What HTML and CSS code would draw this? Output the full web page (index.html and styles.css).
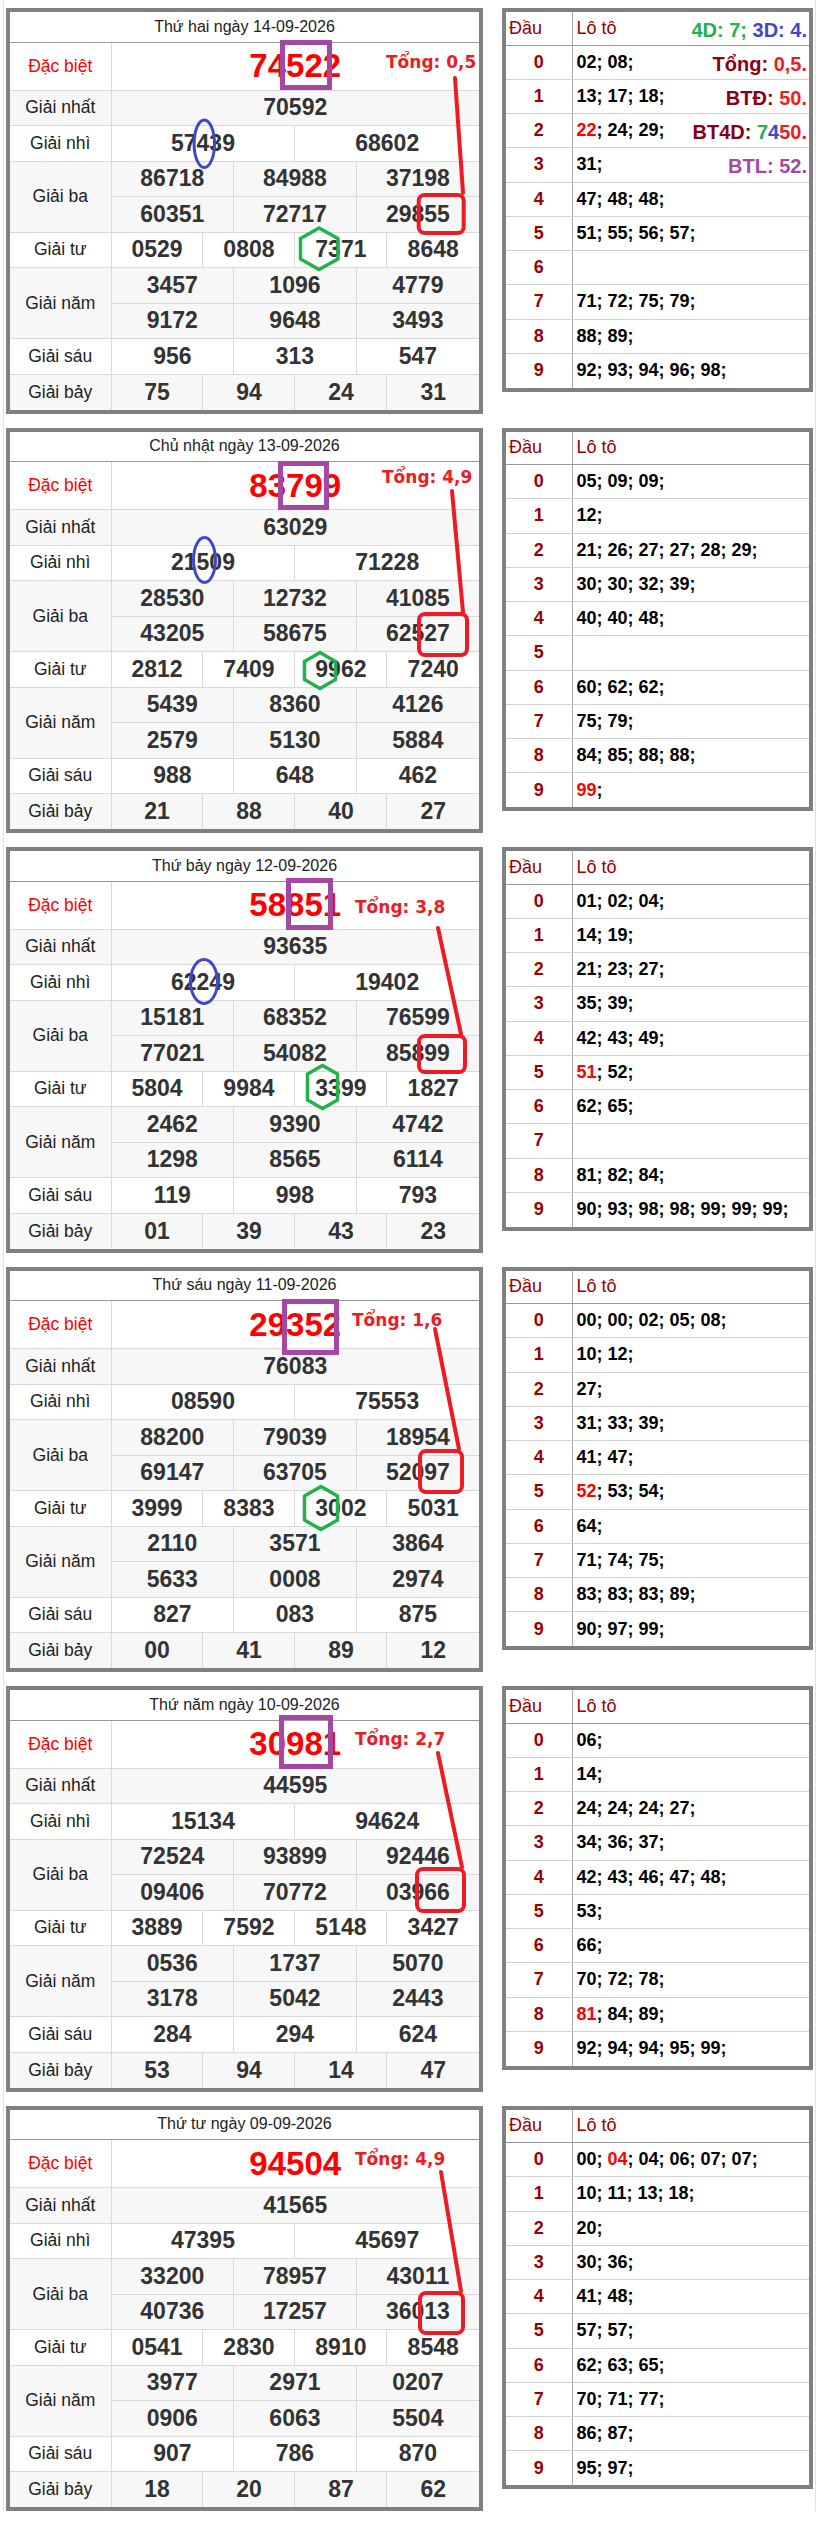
FILE: index.html
```html
<!DOCTYPE html>
<html lang="vi">
<head>
<meta charset="utf-8">
<title>Kết quả xổ số</title>
<link rel="stylesheet" href="styles.css">
</head>
<body>
<div class="page">

<!-- Day 1 -->
<div class="day">
  <div class="kq">
    <table>
      <colgroup><col class="cl"><col span="12"></colgroup>
      <tr class="hd"><td colspan="13">Thứ hai ngày 14-09-2026</td></tr>
      <tr class="db"><td class="lb red">Đặc biệt</td><td colspan="12" class="dbn">74522</td></tr>
      <tr class="r alt"><td class="lb">Giải nhất</td><td colspan="12">70592</td></tr>
      <tr class="r"><td class="lb">Giải nhì</td><td colspan="6">57439</td><td colspan="6">68602</td></tr>
      <tr class="r alt"><td class="lb" rowspan="2">Giải ba</td><td colspan="4">86718</td><td colspan="4">84988</td><td colspan="4">37198</td></tr>
      <tr class="r alt"><td colspan="4">60351</td><td colspan="4">72717</td><td colspan="4">29855</td></tr>
      <tr class="r"><td class="lb">Giải tư</td><td colspan="3">0529</td><td colspan="3">0808</td><td colspan="3">7371</td><td colspan="3">8648</td></tr>
      <tr class="r alt"><td class="lb" rowspan="2">Giải năm</td><td colspan="4">3457</td><td colspan="4">1096</td><td colspan="4">4779</td></tr>
      <tr class="r alt"><td colspan="4">9172</td><td colspan="4">9648</td><td colspan="4">3493</td></tr>
      <tr class="r"><td class="lb">Giải sáu</td><td colspan="4">956</td><td colspan="4">313</td><td colspan="4">547</td></tr>
      <tr class="r alt"><td class="lb">Giải bảy</td><td colspan="3">75</td><td colspan="3">94</td><td colspan="3">24</td><td colspan="3">31</td></tr>
    </table>
  </div>
  <div class="lt">
    <table>
      <colgroup><col class="cd"><col></colgroup>
      <tr class="lh"><th>Đầu</th><th><div class="sp"><span>Lô tô</span><span class="side"><span class="g">4D: 7;</span> <span class="bl">3D: 4.</span></span></div></th></tr>
      <tr><td class="d">0</td><td><div class="sp"><span>02; 08;</span><span class="side"><span class="dr">Tổng:</span> <span class="rd">0,5.</span></span></div></td></tr>
      <tr><td class="d">1</td><td><div class="sp"><span>13; 17; 18;</span><span class="side"><span class="dr">BTĐ:</span> <span class="rd">50.</span></span></div></td></tr>
      <tr><td class="d">2</td><td><div class="sp"><span><span class="hot">22</span>; 24; 29;</span><span class="side"><span class="dr">BT4D:</span> <span class="g">7</span><span class="bl">4</span><span class="rd">50.</span></span></div></td></tr>
      <tr><td class="d">3</td><td><div class="sp"><span>31;</span><span class="side pu">BTL: 52.</span></div></td></tr>
      <tr><td class="d">4</td><td>47; 48; 48;</td></tr>
      <tr><td class="d">5</td><td>51; 55; 56; 57;</td></tr>
      <tr><td class="d">6</td><td></td></tr>
      <tr><td class="d">7</td><td>71; 72; 75; 79;</td></tr>
      <tr><td class="d">8</td><td>88; 89;</td></tr>
      <tr><td class="d">9</td><td>92; 93; 94; 96; 98;</td></tr>
    </table>
  </div>
  <svg class="marks" width="819" height="410" viewBox="0 0 819 410">
    <rect class="m-pu" x="282.5" y="34.5" width="47" height="45"/>
    <ellipse class="m-bl" cx="204.3" cy="135.7" rx="10.2" ry="23.8"/>
    <polygon class="m-gr" points="319,220 338,230.5 338,251 319,261.5 300.5,251 300.5,230.5"/>
    <line class="m-rd" x1="455" y1="70" x2="463" y2="185"/>
    <rect class="m-rd" x="418.7" y="187" width="45" height="38" rx="6"/>
    <text class="tong" x="386" y="60">Tổng: 0,5</text>
  </svg>
</div>

<!-- Day 2 -->
<div class="day">
  <div class="kq">
    <table>
      <colgroup><col class="cl"><col span="12"></colgroup>
      <tr class="hd"><td colspan="13">Chủ nhật ngày 13-09-2026</td></tr>
      <tr class="db"><td class="lb red">Đặc biệt</td><td colspan="12" class="dbn">83799</td></tr>
      <tr class="r alt"><td class="lb">Giải nhất</td><td colspan="12">63029</td></tr>
      <tr class="r"><td class="lb">Giải nhì</td><td colspan="6">21509</td><td colspan="6">71228</td></tr>
      <tr class="r alt"><td class="lb" rowspan="2">Giải ba</td><td colspan="4">28530</td><td colspan="4">12732</td><td colspan="4">41085</td></tr>
      <tr class="r alt"><td colspan="4">43205</td><td colspan="4">58675</td><td colspan="4">62527</td></tr>
      <tr class="r"><td class="lb">Giải tư</td><td colspan="3">2812</td><td colspan="3">7409</td><td colspan="3">9962</td><td colspan="3">7240</td></tr>
      <tr class="r alt"><td class="lb" rowspan="2">Giải năm</td><td colspan="4">5439</td><td colspan="4">8360</td><td colspan="4">4126</td></tr>
      <tr class="r alt"><td colspan="4">2579</td><td colspan="4">5130</td><td colspan="4">5884</td></tr>
      <tr class="r"><td class="lb">Giải sáu</td><td colspan="4">988</td><td colspan="4">648</td><td colspan="4">462</td></tr>
      <tr class="r alt"><td class="lb">Giải bảy</td><td colspan="3">21</td><td colspan="3">88</td><td colspan="3">40</td><td colspan="3">27</td></tr>
    </table>
  </div>
  <div class="lt">
    <table>
      <colgroup><col class="cd"><col></colgroup>
      <tr class="lh"><th>Đầu</th><th>Lô tô</th></tr>
      <tr><td class="d">0</td><td>05; 09; 09;</td></tr>
      <tr><td class="d">1</td><td>12;</td></tr>
      <tr><td class="d">2</td><td>21; 26; 27; 27; 28; 29;</td></tr>
      <tr><td class="d">3</td><td>30; 30; 32; 39;</td></tr>
      <tr><td class="d">4</td><td>40; 40; 48;</td></tr>
      <tr><td class="d">5</td><td></td></tr>
      <tr><td class="d">6</td><td>60; 62; 62;</td></tr>
      <tr><td class="d">7</td><td>75; 79;</td></tr>
      <tr><td class="d">8</td><td>84; 85; 88; 88;</td></tr>
      <tr><td class="d">9</td><td><span class="hot">99</span>;</td></tr>
    </table>
  </div>
  <svg class="marks" width="819" height="410" viewBox="0 0 819 410">
    <rect class="m-pu" x="280.5" y="35.5" width="46" height="44"/>
    <ellipse class="m-bl" cx="204.5" cy="132" rx="11" ry="22.5"/>
    <polygon class="m-gr" points="320,224.5 335.5,233.5 335.5,251.5 320,260.5 304.5,251.5 304.5,233.5"/>
    <line class="m-rd" x1="452" y1="63" x2="463" y2="184"/>
    <rect class="m-rd" x="419" y="186" width="48" height="41" rx="6"/>
    <text class="tong" x="382" y="54.7">Tổng: 4,9</text>
  </svg>
</div>

<!-- Day 3 -->
<div class="day">
  <div class="kq">
    <table>
      <colgroup><col class="cl"><col span="12"></colgroup>
      <tr class="hd"><td colspan="13">Thứ bảy ngày 12-09-2026</td></tr>
      <tr class="db"><td class="lb red">Đặc biệt</td><td colspan="12" class="dbn">58851</td></tr>
      <tr class="r alt"><td class="lb">Giải nhất</td><td colspan="12">93635</td></tr>
      <tr class="r"><td class="lb">Giải nhì</td><td colspan="6">62249</td><td colspan="6">19402</td></tr>
      <tr class="r alt"><td class="lb" rowspan="2">Giải ba</td><td colspan="4">15181</td><td colspan="4">68352</td><td colspan="4">76599</td></tr>
      <tr class="r alt"><td colspan="4">77021</td><td colspan="4">54082</td><td colspan="4">85899</td></tr>
      <tr class="r"><td class="lb">Giải tư</td><td colspan="3">5804</td><td colspan="3">9984</td><td colspan="3">3399</td><td colspan="3">1827</td></tr>
      <tr class="r alt"><td class="lb" rowspan="2">Giải năm</td><td colspan="4">2462</td><td colspan="4">9390</td><td colspan="4">4742</td></tr>
      <tr class="r alt"><td colspan="4">1298</td><td colspan="4">8565</td><td colspan="4">6114</td></tr>
      <tr class="r"><td class="lb">Giải sáu</td><td colspan="4">119</td><td colspan="4">998</td><td colspan="4">793</td></tr>
      <tr class="r alt"><td class="lb">Giải bảy</td><td colspan="3">01</td><td colspan="3">39</td><td colspan="3">43</td><td colspan="3">23</td></tr>
    </table>
  </div>
  <div class="lt">
    <table>
      <colgroup><col class="cd"><col></colgroup>
      <tr class="lh"><th>Đầu</th><th>Lô tô</th></tr>
      <tr><td class="d">0</td><td>01; 02; 04;</td></tr>
      <tr><td class="d">1</td><td>14; 19;</td></tr>
      <tr><td class="d">2</td><td>21; 23; 27;</td></tr>
      <tr><td class="d">3</td><td>35; 39;</td></tr>
      <tr><td class="d">4</td><td>42; 43; 49;</td></tr>
      <tr><td class="d">5</td><td><span class="hot">51</span>; 52;</td></tr>
      <tr><td class="d">6</td><td>62; 65;</td></tr>
      <tr><td class="d">7</td><td></td></tr>
      <tr><td class="d">8</td><td>81; 82; 84;</td></tr>
      <tr><td class="d">9</td><td>90; 93; 98; 98; 99; 99; 99;</td></tr>
    </table>
  </div>
  <svg class="marks" width="819" height="410" viewBox="0 0 819 410">
    <rect class="m-pu" x="288.5" y="33.5" width="42" height="47"/>
    <ellipse class="m-bl" cx="204" cy="134.5" rx="13.5" ry="22"/>
    <polygon class="m-gr" points="322.5,218.5 337.5,227 337.5,253 322.5,261.5 307.5,253 307.5,227"/>
    <line class="m-rd" x1="438" y1="81" x2="461" y2="187"/>
    <rect class="m-rd" x="419" y="189" width="46" height="36" rx="6"/>
    <text class="tong" x="355" y="65.5">Tổng: 3,8</text>
  </svg>
</div>

<!-- Day 4 -->
<div class="day">
  <div class="kq">
    <table>
      <colgroup><col class="cl"><col span="12"></colgroup>
      <tr class="hd"><td colspan="13">Thứ sáu ngày 11-09-2026</td></tr>
      <tr class="db"><td class="lb red">Đặc biệt</td><td colspan="12" class="dbn">29352</td></tr>
      <tr class="r alt"><td class="lb">Giải nhất</td><td colspan="12">76083</td></tr>
      <tr class="r"><td class="lb">Giải nhì</td><td colspan="6">08590</td><td colspan="6">75553</td></tr>
      <tr class="r alt"><td class="lb" rowspan="2">Giải ba</td><td colspan="4">88200</td><td colspan="4">79039</td><td colspan="4">18954</td></tr>
      <tr class="r alt"><td colspan="4">69147</td><td colspan="4">63705</td><td colspan="4">52097</td></tr>
      <tr class="r"><td class="lb">Giải tư</td><td colspan="3">3999</td><td colspan="3">8383</td><td colspan="3">3002</td><td colspan="3">5031</td></tr>
      <tr class="r alt"><td class="lb" rowspan="2">Giải năm</td><td colspan="4">2110</td><td colspan="4">3571</td><td colspan="4">3864</td></tr>
      <tr class="r alt"><td colspan="4">5633</td><td colspan="4">0008</td><td colspan="4">2974</td></tr>
      <tr class="r"><td class="lb">Giải sáu</td><td colspan="4">827</td><td colspan="4">083</td><td colspan="4">875</td></tr>
      <tr class="r alt"><td class="lb">Giải bảy</td><td colspan="3">00</td><td colspan="3">41</td><td colspan="3">89</td><td colspan="3">12</td></tr>
    </table>
  </div>
  <div class="lt">
    <table>
      <colgroup><col class="cd"><col></colgroup>
      <tr class="lh"><th>Đầu</th><th>Lô tô</th></tr>
      <tr><td class="d">0</td><td>00; 00; 02; 05; 08;</td></tr>
      <tr><td class="d">1</td><td>10; 12;</td></tr>
      <tr><td class="d">2</td><td>27;</td></tr>
      <tr><td class="d">3</td><td>31; 33; 39;</td></tr>
      <tr><td class="d">4</td><td>41; 47;</td></tr>
      <tr><td class="d">5</td><td><span class="hot">52</span>; 53; 54;</td></tr>
      <tr><td class="d">6</td><td>64;</td></tr>
      <tr><td class="d">7</td><td>71; 74; 75;</td></tr>
      <tr><td class="d">8</td><td>83; 83; 83; 89;</td></tr>
      <tr><td class="d">9</td><td>90; 97; 99;</td></tr>
    </table>
  </div>
  <svg class="marks" width="819" height="410" viewBox="0 0 819 410">
    <rect class="m-pu" x="284.5" y="34.5" width="52" height="51"/>
    <polygon class="m-gr" points="321,219.5 337.5,229 337.5,253 321,262.5 304.5,253 304.5,229"/>
    <line class="m-rd" x1="435" y1="62" x2="459" y2="182"/>
    <rect class="m-rd" x="420" y="184" width="42" height="41" rx="6"/>
    <text class="tong" x="352" y="59.4">Tổng: 1,6</text>
  </svg>
</div>

<!-- Day 5 -->
<div class="day">
  <div class="kq">
    <table>
      <colgroup><col class="cl"><col span="12"></colgroup>
      <tr class="hd"><td colspan="13">Thứ năm ngày 10-09-2026</td></tr>
      <tr class="db"><td class="lb red">Đặc biệt</td><td colspan="12" class="dbn">30981</td></tr>
      <tr class="r alt"><td class="lb">Giải nhất</td><td colspan="12">44595</td></tr>
      <tr class="r"><td class="lb">Giải nhì</td><td colspan="6">15134</td><td colspan="6">94624</td></tr>
      <tr class="r alt"><td class="lb" rowspan="2">Giải ba</td><td colspan="4">72524</td><td colspan="4">93899</td><td colspan="4">92446</td></tr>
      <tr class="r alt"><td colspan="4">09406</td><td colspan="4">70772</td><td colspan="4">03966</td></tr>
      <tr class="r"><td class="lb">Giải tư</td><td colspan="3">3889</td><td colspan="3">7592</td><td colspan="3">5148</td><td colspan="3">3427</td></tr>
      <tr class="r alt"><td class="lb" rowspan="2">Giải năm</td><td colspan="4">0536</td><td colspan="4">1737</td><td colspan="4">5070</td></tr>
      <tr class="r alt"><td colspan="4">3178</td><td colspan="4">5042</td><td colspan="4">2443</td></tr>
      <tr class="r"><td class="lb">Giải sáu</td><td colspan="4">284</td><td colspan="4">294</td><td colspan="4">624</td></tr>
      <tr class="r alt"><td class="lb">Giải bảy</td><td colspan="3">53</td><td colspan="3">94</td><td colspan="3">14</td><td colspan="3">47</td></tr>
    </table>
  </div>
  <div class="lt">
    <table>
      <colgroup><col class="cd"><col></colgroup>
      <tr class="lh"><th>Đầu</th><th>Lô tô</th></tr>
      <tr><td class="d">0</td><td>06;</td></tr>
      <tr><td class="d">1</td><td>14;</td></tr>
      <tr><td class="d">2</td><td>24; 24; 24; 27;</td></tr>
      <tr><td class="d">3</td><td>34; 36; 37;</td></tr>
      <tr><td class="d">4</td><td>42; 43; 46; 47; 48;</td></tr>
      <tr><td class="d">5</td><td>53;</td></tr>
      <tr><td class="d">6</td><td>66;</td></tr>
      <tr><td class="d">7</td><td>70; 72; 78;</td></tr>
      <tr><td class="d">8</td><td><span class="hot">81</span>; 84; 89;</td></tr>
      <tr><td class="d">9</td><td>92; 94; 94; 95; 99;</td></tr>
    </table>
  </div>
  <svg class="marks" width="819" height="410" viewBox="0 0 819 410">
    <rect class="m-pu" x="281.5" y="31.5" width="49" height="49"/>
    <line class="m-rd" x1="438" y1="67" x2="462" y2="181"/>
    <rect class="m-rd" x="417" y="183" width="47" height="42" rx="6"/>
    <text class="tong" x="355" y="59.1">Tổng: 2,7</text>
  </svg>
</div>

<!-- Day 6 -->
<div class="day">
  <div class="kq">
    <table>
      <colgroup><col class="cl"><col span="12"></colgroup>
      <tr class="hd"><td colspan="13">Thứ tư ngày 09-09-2026</td></tr>
      <tr class="db"><td class="lb red">Đặc biệt</td><td colspan="12" class="dbn">94504</td></tr>
      <tr class="r alt"><td class="lb">Giải nhất</td><td colspan="12">41565</td></tr>
      <tr class="r"><td class="lb">Giải nhì</td><td colspan="6">47395</td><td colspan="6">45697</td></tr>
      <tr class="r alt"><td class="lb" rowspan="2">Giải ba</td><td colspan="4">33200</td><td colspan="4">78957</td><td colspan="4">43011</td></tr>
      <tr class="r alt"><td colspan="4">40736</td><td colspan="4">17257</td><td colspan="4">36013</td></tr>
      <tr class="r"><td class="lb">Giải tư</td><td colspan="3">0541</td><td colspan="3">2830</td><td colspan="3">8910</td><td colspan="3">8548</td></tr>
      <tr class="r alt"><td class="lb" rowspan="2">Giải năm</td><td colspan="4">3977</td><td colspan="4">2971</td><td colspan="4">0207</td></tr>
      <tr class="r alt"><td colspan="4">0906</td><td colspan="4">6063</td><td colspan="4">5504</td></tr>
      <tr class="r"><td class="lb">Giải sáu</td><td colspan="4">907</td><td colspan="4">786</td><td colspan="4">870</td></tr>
      <tr class="r alt"><td class="lb">Giải bảy</td><td colspan="3">18</td><td colspan="3">20</td><td colspan="3">87</td><td colspan="3">62</td></tr>
    </table>
  </div>
  <div class="lt">
    <table>
      <colgroup><col class="cd"><col></colgroup>
      <tr class="lh"><th>Đầu</th><th>Lô tô</th></tr>
      <tr><td class="d">0</td><td>00; <span class="hot">04</span>; 04; 06; 07; 07;</td></tr>
      <tr><td class="d">1</td><td>10; 11; 13; 18;</td></tr>
      <tr><td class="d">2</td><td>20;</td></tr>
      <tr><td class="d">3</td><td>30; 36;</td></tr>
      <tr><td class="d">4</td><td>41; 48;</td></tr>
      <tr><td class="d">5</td><td>57; 57;</td></tr>
      <tr><td class="d">6</td><td>62; 63; 65;</td></tr>
      <tr><td class="d">7</td><td>70; 71; 77;</td></tr>
      <tr><td class="d">8</td><td>86; 87;</td></tr>
      <tr><td class="d">9</td><td>95; 97;</td></tr>
    </table>
  </div>
  <svg class="marks" width="819" height="410" viewBox="0 0 819 410">
    <line class="m-rd" x1="441" y1="66" x2="461" y2="185"/>
    <rect class="m-rd" x="420" y="187" width="43" height="40" rx="6"/>
    <text class="tong" x="355" y="58.7">Tổng: 4,9</text>
  </svg>
</div>

</div>
</body>
</html>
```

FILE: styles.css
```css
* { box-sizing: border-box; }
html, body { margin: 0; background: #fff; }
body {
  font-family: "Liberation Sans", Arial, Helvetica, sans-serif;
  color: #222;
}

.page {
  width: 813px;
  margin-left: 3px;
  padding-top: 8px;
  border-left: 1px solid #e2e2e2;
  border-right: 1px solid #e2e2e2;
}

.day {
  position: relative;
  display: flex;
  align-items: flex-start;
  gap: 19px;
  padding-left: 2px;
  margin-bottom: 14px;
}

/* ---------- results table ---------- */
.kq {
  width: 477px;
  border: 4px solid #808080;
  background: #fff;
}
.kq table {
  width: 100%;
  border-collapse: collapse;
  border-style: hidden;
  table-layout: fixed;
}
.kq col.cl { width: 101px; }
.kq td {
  border: 1px solid #d9d9d9;
  padding: 0;
  text-align: center;
  vertical-align: middle;
  font-weight: bold;
  font-size: 23px;
  color: #333;
  white-space: nowrap;
}
.kq tr.hd { height: 30px; }
.kq tr.hd td {
  font-weight: normal;
  font-size: 16px;
  color: #222;
  border-bottom-color: #999;
}
.kq tr.db { height: 48px; }
.kq tr.r { height: 35.5px; }
.kq tr.alt { background: #f7f7f7; }
.kq td.lb {
  font-weight: normal;
  font-size: 17.5px;
  color: #222;
}
.kq td.lb.red { color: #f00; }
.kq td.dbn {
  font-size: 33px;
  color: #f00;
}

/* ---------- loto table ---------- */
.lt {
  width: 311px;
  border: 4px solid #808080;
  background: #fff;
}
.lt table {
  width: 100%;
  border-collapse: collapse;
  border-style: hidden;
  table-layout: fixed;
}
.lt col.cd { width: 66px; }
.lt th, .lt td {
  border: 1px solid #cfcfcf;
  padding: 0 2px 0 4px;
  text-align: left;
  vertical-align: middle;
  font-size: 18px;
  white-space: nowrap;
}
.lt tr { height: 34.25px; }
.lt tr.lh { height: 33px; }
.lt th {
  font-weight: normal;
  color: #990000;
  border-bottom-color: #999;
}
.lt th:first-child { padding-left: 3px; }
.lt td {
  font-weight: bold;
  color: #000;
}
.lt td.d {
  color: #990000;
  text-align: center;
  padding: 0;
}
.lt td.d, .lt th:first-child { border-right-color: #aaa; }
.hot { color: #f00; }

.sp {
  display: flex;
  justify-content: space-between;
  align-items: center;
}
.side {
  font-size: 20px;
  font-weight: bold;
  position: relative;
  top: 2px;
}
.g { color: #22b14c; }
.bl { color: #3f48cc; }
.dr { color: #880015; }
.rd { color: #ed1c24; }
.pu { color: #a349a4; }

/* ---------- hand-drawn annotations ---------- */
.marks {
  position: absolute;
  left: -4px;
  top: 0;
  overflow: visible;
  pointer-events: none;
}
.m-pu { fill: none; stroke: #a349a4; stroke-width: 5; }
.m-bl { fill: none; stroke: #3f48cc; stroke-width: 3; }
.m-gr { fill: none; stroke: #22b14c; stroke-width: 3.5; stroke-linejoin: miter; }
.m-rd { fill: none; stroke: #ed1c24; stroke-width: 4; stroke-linecap: round; stroke-linejoin: round; }
.tong {
  font-family: "DejaVu Sans", Verdana, sans-serif;
  font-weight: bold;
  font-size: 17px;
  fill: #ed1c24;
}
```
